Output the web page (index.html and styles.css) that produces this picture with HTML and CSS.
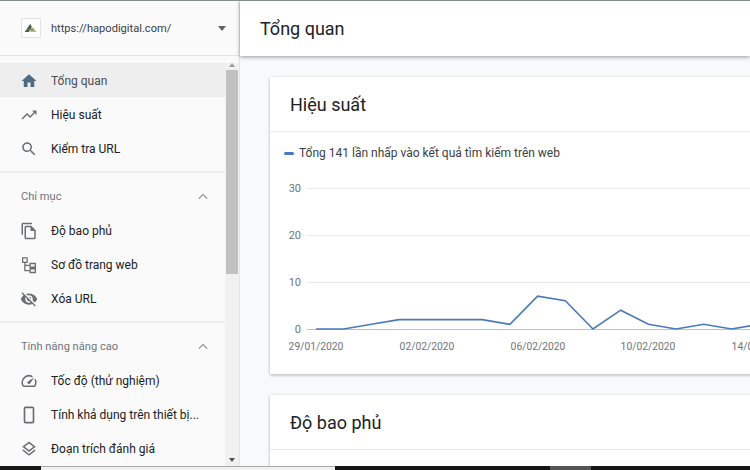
FILE: index.html
```html
<!DOCTYPE html>
<html lang="vi">
<head>
<meta charset="utf-8">
<title>Tổng quan</title>
<link rel="stylesheet" href="styles.css">
</head>
<body>
<div class="page">
  <div class="app">
    <aside class="sidebar">
      <div class="property">
        <span class="favicon">
          <svg viewBox="0 0 20 20" width="20" height="20"><path d="M3 14.5 9 5.500l2 3-3.500 6z" fill="#4c5a4a"/><path d="M8.500 14.500 11 8.500l5.500 6z" fill="#a9bb8c"/><path d="M6.500 11h6l1 1.300h-8z" fill="#6f7f5e"/></svg>
        </span>
        <span class="property-url">https://hapodigital.com/</span>
        <span class="caret-down"></span>
      </div>
      <div class="nav-wrap">
        <nav class="nav">
          <a class="item active"><svg class="icon" viewBox="0 0 24 24"><path d="M10 20v-6h4v6h5v-8h3L12 3 2 12h3v8z"/></svg><span>Tổng quan</span></a>
          <a class="item"><svg class="icon" viewBox="0 0 24 24"><path d="M16 6l2.290 2.290-4.880 4.880-4-4L2 16.590 3.410 18l6-6 4 4 6.300-6.290L22 12V6z"/></svg><span>Hiệu suất</span></a>
          <a class="item"><svg class="icon" viewBox="0 0 24 24"><path d="M15.500 14h-.79l-.28-.27C15.410 12.590 16 11.110 16 9.500 16 5.910 13.090 3 9.500 3S3 5.910 3 9.500 5.910 16 9.500 16c1.610 0 3.090-.59 4.230-1.570l.27.28v.79l5 4.990L20.490 19l-4.990-5zm-6 0C7.010 14 5 11.990 5 9.500S7.010 5 9.500 5 14 7.010 14 9.500 11.990 14 9.500 14z"/></svg><span>Kiểm tra URL</span></a>
          <div class="section">
            <div class="section-head"><span>Chỉ mục</span><svg class="chev" viewBox="0 0 12 8"><path d="M1 6.500 6 1.500l5 5"/></svg></div>
            <a class="item"><svg class="icon" viewBox="0 0 24 24"><path d="M16 1H4c-1.100 0-2 .9-2 2v14h2V3h12V1zm-1 4H8c-1.100 0-1.990.9-1.990 2L6 21c0 1.100.89 2 1.990 2H19c1.100 0 2-.9 2-2V11l-6-6zM8 21V7h6v5h5v9H8z"/></svg><span>Độ bao phủ</span></a>
            <a class="item"><svg class="icon" viewBox="0 0 24 24"><path class="icon-line" d="M3.500 2.500h6v6h-6zM13.500 10h7v5h-7zM13.500 17h7v5h-7zM6.500 8.500v11h7M6.500 12.500h7"/></svg><span>Sơ đồ trang web</span></a>
            <a class="item"><svg class="icon" viewBox="0 0 24 24"><path d="M12 7c2.760 0 5 2.240 5 5 0 .65-.13 1.260-.36 1.830l2.920 2.920c1.510-1.260 2.700-2.890 3.430-4.750-1.730-4.390-6-7.500-11-7.500-1.400 0-2.740.25-3.980.7l2.160 2.160C10.740 7.130 11.350 7 12 7zM2 4.270l2.280 2.280.46.46C3.080 8.300 1.780 10.020 1 12c1.730 4.390 6 7.500 11 7.500 1.550 0 3.030-.3 4.380-.84l.42.42L19.730 22 21 20.730 3.270 3 2 4.270zM7.530 9.800l1.550 1.550c-.05.21-.08.43-.08.65 0 1.660 1.340 3 3 3 .22 0 .44-.03.65-.08l1.550 1.550c-.67.33-1.410.53-2.200.53-2.760 0-5-2.240-5-5 0-.79.2-1.530.53-2.200zm4.310-.78l3.150 3.150.02-.16c0-1.660-1.340-3-3-3l-.17.01z"/></svg><span>Xóa URL</span></a>
          </div>
          <div class="section">
            <div class="section-head"><span>Tính năng nâng cao</span><svg class="chev" viewBox="0 0 12 8"><path d="M1 6.500 6 1.500l5 5"/></svg></div>
            <a class="item"><svg class="icon" viewBox="0 0 24 24"><path d="M20.380 8.570l-1.230 1.850a8 8 0 0 1-.22 7.580H5.070A8 8 0 0 1 15.580 6.850l1.850-1.230A10 10 0 0 0 3.350 19a2 2 0 0 0 1.720 1h13.850a2 2 0 0 0 1.740-1 10 10 0 0 0-.27-10.440zm-9.790 6.840a2 2 0 0 0 2.830 0l5.660-8.490-8.490 5.660a2 2 0 0 0 0 2.830z"/></svg><span>Tốc độ (thử nghiệm)</span></a>
            <a class="item"><svg class="icon" viewBox="0 0 24 24"><path class="icon-line icon-heavy" d="M7.500 1.800h9a1.500 1.500 0 0 1 1.500 1.500v17.400a1.500 1.500 0 0 1-1.500 1.500h-9A1.500 1.500 0 0 1 6 20.700V3.300A1.500 1.500 0 0 1 7.500 1.800z"/></svg><span>Tính khả dụng trên thiết bị...</span></a>
            <a class="item"><svg class="icon" viewBox="0 0 24 24"><path d="M11.990 18.540l-7.370-5.730L3 14.070l9 7 9-7-1.630-1.270-7.380 5.740zM12 16l7.360-5.730L21 9l-9-7-9 7 1.630 1.270L12 16zm0-11.470L17.740 9 12 13.470 6.260 9 12 4.530z"/></svg><span>Đoạn trích đánh giá</span></a>
          </div>
        </nav>
        <div class="scrollbar">
          <span class="arrow arrow-up"></span>
          <div class="thumb"></div>
          <div class="track"></div>
          <span class="arrow arrow-down"></span>
        </div>
      </div>
    </aside>
    <main class="main">
      <header class="topbar"><h1>Tổng quan</h1></header>
      <div class="content">
        <section class="card">
          <h2 class="card-title">Hiệu suất</h2>
          <div class="legend"><span class="dash"></span><span>Tổng 141 lần nhấp vào kết quả tìm kiếm trên web</span></div>
          <svg class="chart" viewBox="0 0 520 200" width="520" height="200">
            <g class="grid">
              <line x1="37" x2="520" y1="14.500" y2="14.500"/>
              <line x1="37" x2="520" y1="61.500" y2="61.500"/>
              <line x1="37" x2="520" y1="108.500" y2="108.500"/>
            </g>
            <line class="axis" x1="37" x2="520" y1="155.500" y2="155.500"/>
            <g class="ylabels">
              <text x="31" y="18">30</text>
              <text x="31" y="65">20</text>
              <text x="31" y="112">10</text>
              <text x="31" y="159">0</text>
            </g>
            <g class="xlabels">
              <text x="46" y="176">29/01/2020</text>
              <text x="157" y="176">02/02/2020</text>
              <text x="268" y="176">06/02/2020</text>
              <text x="378" y="176">10/02/2020</text>
              <text x="489" y="176">14/02/2020</text>
            </g>
            <polyline class="line" points="46,155 73.700,155 101.400,150.300 129.100,145.600 156.800,145.600 184.500,145.600 212.200,145.600 239.900,150.300 267.600,122.100 295.300,126.800 323,155 350.700,136.200 378.400,150.300 406.100,155 433.800,150.300 461.500,155 489.200,150.300 516.900,145.600"/>
          </svg>
        </section>
        <section class="card card-second">
          <h2 class="card-title">Độ bao phủ</h2>
        </section>
      </div>
    </main>
  </div>
  <div class="taskbar">
    <span class="tb-dark tb-start"></span>
    <span class="tb-light"></span>
    <span class="tb-dark tb-mid"></span>
    <span class="tb-grey"></span>
    <span class="tb-dark tb-end"></span>
  </div>
</div>
</body>
</html>
```
FILE: styles.css
```css
* { box-sizing: border-box; }
html, body { margin: 0; padding: 0; }
body { font-family: Roboto, "Noto Sans", sans-serif; color: #202124; background: #fff; }
.page { width: 750px; height: 470px; overflow: hidden; display: flex; flex-direction: column; border-top: 1px solid #858c8c; }
.app { flex: 1; min-height: 0; display: flex; }

.sidebar { width: 240px; flex: none; display: flex; flex-direction: column; background: #fafafa; border-right: 1px solid #e4e4e4; }
.property { height: 55px; flex: none; display: flex; align-items: center; padding: 0 13px 0 21px; border-bottom: 1px solid #e3e3e3; }
.favicon { width: 20px; height: 20px; background: #fff; border: 1px solid #e2e2e2; border-radius: 2px; display: flex; align-items: center; justify-content: center; flex: none; }
.favicon svg { width: 18px; height: 18px; }
.property-url { margin-left: 10px; flex: 1; font-size: 11.100px; color: #3c4043; }
.caret-down { width: 0; height: 0; border-left: 4.500px solid transparent; border-right: 4.500px solid transparent; border-top: 5px solid #5f6368; }

.nav-wrap { flex: 1; min-height: 0; display: flex; padding-top: 7px; }
.nav { flex: 1; min-width: 0; display: flex; flex-direction: column; }
.item { height: 34px; flex: none; display: flex; align-items: center; padding: 1px 0 0 20px; font-size: 12px; color: #202124; }
.item.active { background: #eeeeee; color: #4a4f54; }
.item.active .icon { fill: #4f6b82; }
.icon { width: 18px; height: 18px; flex: none; margin-right: 13px; fill: #6b6f73; }
.icon-line { fill: none; stroke: #6b6f73; stroke-width: 1.700; }
.icon-heavy { stroke-width: 2.200; }

.section { border-top: 2px solid #eeeeee; margin-top: 6px; }
.section-head { height: 40px; display: flex; align-items: center; justify-content: space-between; padding: 6px 17px 0 21px; font-size: 11.100px; color: #70757a; }
.chev { width: 10px; height: 7px; fill: none; stroke: #80868b; stroke-width: 1.300; }

.scrollbar { width: 14px; flex: none; display: flex; flex-direction: column; align-items: center; background: #f1f1f1; }
.arrow { width: 0; height: 0; flex: none; border-left: 3.500px solid transparent; border-right: 3.500px solid transparent; }
.arrow-up { border-bottom: 4px solid #a0a0a0; margin: 0 0 3px; }
.arrow-down { border-top: 4px solid #505050; margin: 3px 0 4px; }
.thumb { width: 12px; height: 204px; flex: none; background: #c1c1c1; }
.track { flex: 1; }

.main { flex: 1; min-width: 0; display: flex; flex-direction: column; background: #f8f9fa; }
.topbar { height: 55px; flex: none; display: flex; align-items: center; padding: 0 20px; background: #fff; box-shadow: 0 1px 4px rgba(0,0,0,.4); position: relative; }
.topbar h1 { margin: 0; font-size: 18px; font-weight: 400; color: #202124; }
.content { flex: 1; min-height: 0; overflow: hidden; padding: 21px 0 0 30px; }
.card { width: 520px; height: 297px; background: #fff; box-shadow: 0 1px 3px rgba(0,0,0,.3); }
.card-second { margin-top: 21px; }
.card-title { margin: 0; height: 55px; display: flex; align-items: center; padding-left: 20px; font-size: 18px; font-weight: 400; color: #202124; border-bottom: 1px solid #e8eaed; }
.legend { height: 42px; display: flex; align-items: center; padding: 0 0 0 14px; font-size: 12px; color: #3c4043; }
.dash { width: 10px; height: 3px; border-radius: 2px; background: #4678c0; margin-right: 5px; }
.chart { display: block; }
.grid line { stroke: #e8eaed; stroke-width: 1; }
.axis { stroke: #bdc1c6; stroke-width: 1; }
.line { fill: none; stroke: #4a7ab8; stroke-width: 1.600; }
.ylabels text { font-size: 11px; fill: #70757a; text-anchor: end; }
.xlabels text { font-size: 10.300px; fill: #70757a; text-anchor: middle; }

.taskbar { height: 4px; flex: none; display: flex; }
.tb-dark { background: #161616; }
.tb-start { width: 41px; }
.tb-light { width: 294px; background: #f0f0f0; border-top: 1px solid #a8a8a8; }
.tb-mid { width: 215px; }
.tb-grey { width: 41px; background: #555; }
.tb-end { flex: 1; }
```
